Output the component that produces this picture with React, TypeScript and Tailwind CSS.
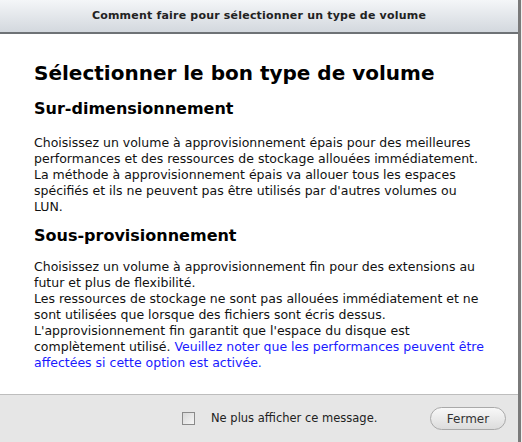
export default function App() {
  return (
    <div className="w-[522px] h-[442px] bg-white flex" style={{ fontFamily: '"DejaVu Sans", Verdana, sans-serif' }}>
      <div className="w-[518px] h-full flex flex-col">
        <div className="h-[34px] shrink-0 bg-gradient-to-b from-[#f4f6f8] to-[#d3d8de] border-b-2 border-[#6e7276] flex items-center justify-center">
          <span className="text-[11px] font-bold text-[#222] tracking-[0.2px]">
            Comment faire pour sélectionner un type de volume
          </span>
        </div>
        <div className="flex-1 pl-[34px] pr-[30px] pt-[26px] text-[#111]">
          <h1 className="text-[20px] font-bold leading-[26px] text-black">Sélectionner le bon type de volume</h1>
          <h2 className="mt-[12px] text-[16px] font-bold leading-[22px] text-black">Sur-dimensionnement</h2>
          <p className="mt-[15px] text-[12.5px] leading-[16px]">
            Choisissez un volume à approvisionnement épais pour des meilleures performances et des ressources de stockage allouées immédiatement.
            <br />
            La méthode à approvisionnement épais va allouer tous les espaces spécifiés et ils ne peuvent pas être utilisés par d'autres volumes ou LUN.
          </p>
          <h2 className="mt-[10px] text-[16px] font-bold leading-[22px] text-black">Sous-provisionnement</h2>
          <p className="mt-[12px] text-[12.5px] leading-[16px]">
            Choisissez un volume à approvisionnement fin pour des extensions au futur et plus de flexibilité.
            <br />
            Les ressources de stockage ne sont pas allouées immédiatement et ne sont utilisées que lorsque des fichiers sont écris dessus.
            <br />
            L'approvisionnement fin garantit que l'espace du disque est complètement utilisé.{' '}
            <span className="text-[#1a1aff]">Veuillez noter que les performances peuvent être affectées si cette option est activée.</span>
          </p>
        </div>
        <div className="h-[48px] shrink-0 bg-[#e6e6e6] border-t border-[#bdbdbd] flex items-center">
          <div className="ml-[182px] w-[13px] h-[13px] border border-[#8a8a8a] bg-gradient-to-br from-[#d8d8d8] to-[#f6f6f6]" />
          <span className="ml-[16px] text-[11.5px] text-[#222]">Ne plus afficher ce message.</span>
          <button className="ml-auto mr-[12px] w-[76px] h-[23px] rounded-full border border-[#a9a9a9] bg-gradient-to-b from-[#f8f8f8] to-[#dcdcdc] text-[12px] text-[#333]">
            Fermer
          </button>
        </div>
      </div>
      <div className="w-[3px] h-full bg-[#7a7a7a]" />
      <div className="w-[1px] h-full bg-[#f0f0f0]" />
    </div>
  );
}
